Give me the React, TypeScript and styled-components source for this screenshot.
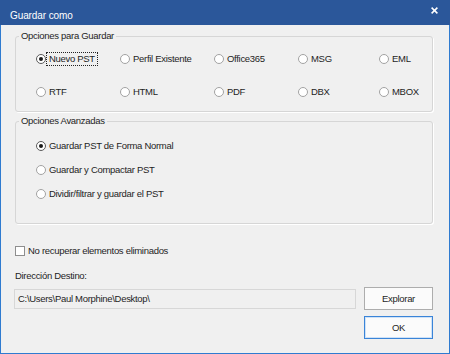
import styled, { createGlobalStyle } from "styled-components";

const GlobalStyle = createGlobalStyle`
    html, body {
        margin: 0;
        padding: 0;
        background: #f0f0f0;
    }
    * {
        box-sizing: border-box;
    }
`;

const Window = styled.div`
    width: 450px;
    height: 354px;
    display: flex;
    flex-direction: column;
    background: #f0f0f0;
    font-family: "Liberation Sans", Arial, sans-serif;
    font-size: 9.5px;
    letter-spacing: -0.3px;
    color: #1e1e1e;
`;

const TitleBar = styled.div`
    height: 25px;
    flex: none;
    display: flex;
    align-items: flex-start;
    justify-content: space-between;
    padding: 0 12px 0 10px;
    background: #2b579a;
    color: #ffffff;
`;

const Title = styled.div`
    margin-top: 10px;
    font-size: 10px;
    line-height: 12px;
    letter-spacing: -0.1px;
`;

const CloseIcon = styled.svg`
    margin-top: 7px;
    width: 7px;
    height: 7px;
`;

const Body = styled.div`
    flex: 1;
    display: flex;
    flex-direction: column;
    padding: 5px 16px 0 14px;
    border: 1px solid #2f7bd0;
    border-top: none;
`;

const Group = styled.fieldset<{ $gap?: number }>`
    margin: ${p => p.$gap ?? 0}px 0 0 0;
    padding: 0;
    min-width: 0;
    border: 1px solid #d6d6d6;
    border-radius: 3px;
    box-shadow: 1px 1px 0 #ffffff;
`;

const GroupTitle = styled.legend`
    margin-left: 3px;
    padding: 0 2px;
    line-height: 12px;
`;

const FormatGrid = styled.div`
    display: grid;
    grid-template-columns: 84px 94px 84px 81px 1fr;
    row-gap: 17px;
    padding: 9px 0 11px 20px;
`;

const ModeList = styled.div`
    display: flex;
    flex-direction: column;
    gap: 8px;
    padding: 11px 0 21px 20px;
`;

const Option = styled.label`
    display: inline-flex;
    align-items: center;
    gap: 1px;
    height: 16px;
    white-space: nowrap;
`;

const RadioMark = styled.span<{ $checked?: boolean }>`
    position: relative;
    width: 10px;
    height: 10px;
    flex: none;
    border-radius: 50%;
    background: #ffffff;
    border: 1px solid ${p => (p.$checked ? "#5a5a5a" : "#a2a2a2")};

    &::after {
        content: "";
        display: ${p => (p.$checked ? "block" : "none")};
        position: absolute;
        left: 2px;
        top: 2px;
        width: 4px;
        height: 4px;
        border-radius: 50%;
        background: #1a1a1a;
    }
`;

const CheckMark = styled.span`
    width: 10px;
    height: 10px;
    flex: none;
    background: #ffffff;
    border: 1px solid #8e8e8e;
`;

const Caption = styled.span<{ $focused?: boolean }>`
    display: inline-block;
    line-height: 12px;
    padding: 0 2px;
    outline: ${p => (p.$focused ? "1px dotted #222" : "none")};
`;

const FieldLabel = styled.div<{ $gap: number }>`
    margin-top: ${p => p.$gap}px;
    line-height: 16px;
`;

const PathRow = styled.div`
    display: flex;
    align-items: center;
    gap: 8px;
    margin-top: 3px;
`;

const PathBox = styled.div`
    flex: 1;
    height: 20px;
    margin-left: -1px;
    padding: 0 3px;
    display: flex;
    align-items: center;
    background: #f0f0f0;
    border: 1px solid #d7d7d7;
`;

const Button = styled.button<{ $primary?: boolean }>`
    width: 69px;
    height: 23px;
    font: inherit;
    letter-spacing: inherit;
    color: #1e1e1e;
    background: #fbfbfb;
    border: 1px solid ${p => (p.$primary ? "#3a84d8" : "#adadad")};
    box-shadow: ${p => (p.$primary ? "inset 0 0 0 1px #cfe2f7" : "none")};
    padding: 0;
`;

const Footer = styled.div`
    display: flex;
    justify-content: flex-end;
    margin-top: 6px;
`;

const formats = [
    "Nuevo PST", "Perfil Existente", "Office365", "MSG", "EML",
    "RTF", "HTML", "PDF", "DBX", "MBOX",
];

const modes = [
    "Guardar PST de Forma Normal",
    "Guardar y Compactar PST",
    "Dividir/filtrar y guardar el PST",
];

function Radio({ label, checked, focused }: { label: string; checked?: boolean; focused?: boolean }): JSX.Element {
    return (
        <Option>
            <RadioMark $checked={checked} />
            <Caption $focused={focused}>{label}</Caption>
        </Option>
    );
}

function App(): JSX.Element {
    return (
        <>
            <GlobalStyle />
            <Window>
                <TitleBar>
                    <Title>Guardar como</Title>
                    <CloseIcon viewBox="0 0 7 7">
                        <path d="M0.6 0.6 L6.4 6.4 M6.4 0.6 L0.6 6.4" stroke="#ffffff" strokeWidth="1.5" />
                    </CloseIcon>
                </TitleBar>
                <Body>
                    <Group>
                        <GroupTitle>Opciones para Guardar</GroupTitle>
                        <FormatGrid>
                            {formats.map((f, i) => (
                                <Radio key={f} label={f} checked={i === 0} focused={i === 0} />
                            ))}
                        </FormatGrid>
                    </Group>
                    <Group $gap={3}>
                        <GroupTitle>Opciones Avanzadas</GroupTitle>
                        <ModeList>
                            {modes.map((m, i) => (
                                <Radio key={m} label={m} checked={i === 0} />
                            ))}
                        </ModeList>
                    </Group>
                    <FieldLabel $gap={19}>
                        <Option>
                            <CheckMark />
                            <Caption>No recuperar elementos eliminados</Caption>
                        </Option>
                    </FieldLabel>
                    <FieldLabel $gap={7}>Dirección Destino:</FieldLabel>
                    <PathRow>
                        <PathBox>C:\Users\Paul Morphine\Desktop\</PathBox>
                        <Button>Explorar</Button>
                    </PathRow>
                    <Footer>
                        <Button $primary>OK</Button>
                    </Footer>
                </Body>
            </Window>
        </>
    );
}

export default App;
